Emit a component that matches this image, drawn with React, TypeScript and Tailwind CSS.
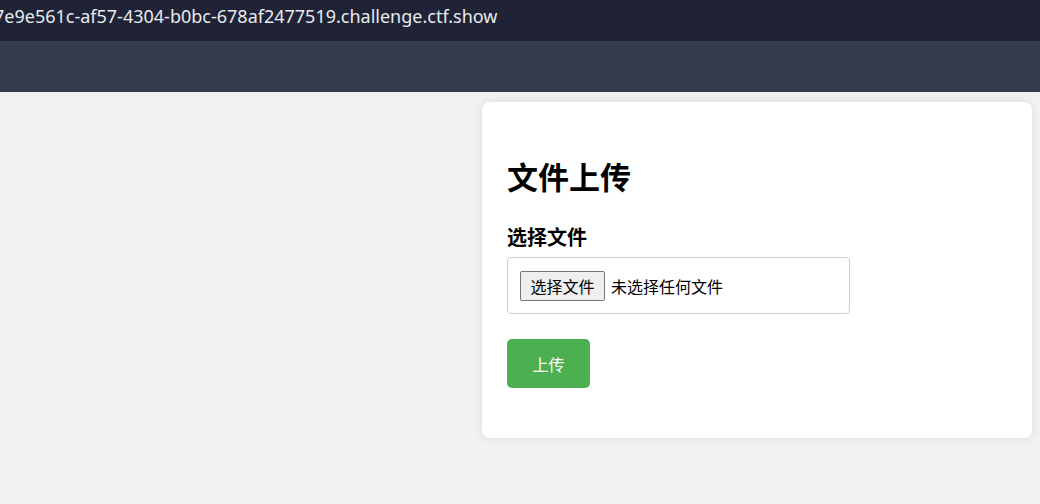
import React from 'react';

const cjk = { fontFamily: '"Microsoft YaHei", "Noto Sans CJK SC", "Noto Sans", sans-serif' };

const AddressBar = () => (
  <div className="h-[41px] bg-[#1f2335] overflow-hidden pt-[4px]">
    <span
      className="block ml-[-6px] whitespace-nowrap text-[18px] leading-[24px] text-[#e8eaef]"
      style={{ fontFamily: '"Noto Sans", "Open Sans", sans-serif' }}
    >
      7e9e561c-af57-4304-b0bc-678af2477519.challenge.ctf.show
    </span>
  </div>
);

const UploadCard = () => (
  <div className="w-[550px] bg-white rounded-[8px] shadow-[0_0_10px_rgba(0,0,0,0.1)] px-[25px] pt-[54px] pb-[50px] text-black" style={cjk}>
    <h1 className="text-[31px] leading-[40px] font-bold">文件上传</h1>
    <form onSubmit={(e) => e.preventDefault()}>
      <label className="block mt-[29px] text-[20px] leading-[24px] font-bold">选择文件</label>
      {/* file picker, drawn by hand so the Chinese captions show */}
      <div className="mt-[8px] w-[343px] h-[57px] border border-[#cccccc] rounded-[4px] px-[12px] flex items-center">
        <button
          type="button"
          className="h-[30px] w-[85px] bg-[#efefef] border border-[#767676] rounded-[2px] text-[16px] leading-[20px] text-black flex items-center justify-center"
        >
          选择文件
        </button>
        <span className="ml-[6px] text-[16px] leading-[20px]">未选择任何文件</span>
      </div>
      <button
        type="submit"
        className="mt-[25px] h-[49px] w-[83px] bg-[#4caf50] text-white text-[16px] rounded-[5px] flex items-center justify-center"
      >
        上传
      </button>
    </form>
  </div>
);

const App = () => {
  return (
    <div className="w-full h-[504px] bg-[#f2f2f2] flex flex-col overflow-hidden">
      <AddressBar />
      <div className="h-[51px] bg-[#353a4e]" />
      <div className="flex justify-end pr-[8px] pt-[10px]">
        <UploadCard />
      </div>
    </div>
  );
};

export default App;
